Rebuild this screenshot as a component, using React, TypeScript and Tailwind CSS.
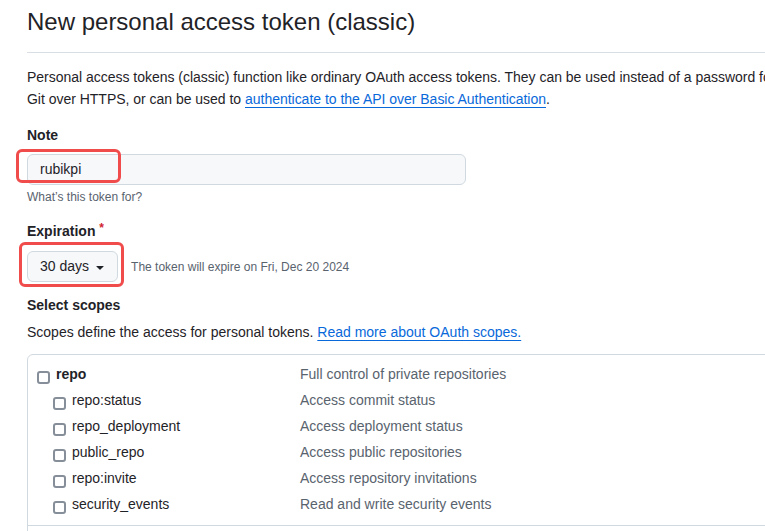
import React from 'react'

const scopes = [
  { name: 'repo', desc: 'Full control of private repositories', parent: true },
  { name: 'repo:status', desc: 'Access commit status' },
  { name: 'repo_deployment', desc: 'Access deployment status' },
  { name: 'public_repo', desc: 'Access public repositories' },
  { name: 'repo:invite', desc: 'Access repository invitations' },
  { name: 'security_events', desc: 'Read and write security events' },
]

function Checkbox() {
  return (
    <span className="inline-block w-[13px] h-[13px] shrink-0 rounded-[3px] border-2 border-[#868f99] bg-white translate-y-[3px]" />
  )
}

function ScopeRow({ name, desc, parent }: { name: string; desc: string; parent?: boolean }) {
  return (
    <div className="flex items-center h-[26px]">
      <div className={`flex items-center w-[263px] gap-[6px] ${parent ? '' : 'pl-[16px]'}`}>
        <Checkbox />
        <span className={parent ? 'font-bold text-[#1f2328]' : 'text-[#1f2328]'}>{name}</span>
      </div>
      <span className="text-[#59636e]">{desc}</span>
    </div>
  )
}

export default function App() {
  return (
    <div className="relative w-[765px] h-[531px] overflow-hidden bg-white text-[#1f2328] font-['Liberation_Sans',Arial,sans-serif] text-[14px]">
      <div className="pl-[27px] w-[1100px]">
        <div className="pt-[4px] pb-[12px] border-b border-[#d8dee4]">
          <h1 className="text-[24px] leading-[36px] font-normal">New personal access token (classic)</h1>
        </div>

        <p className="mt-[13px] leading-[22px] whitespace-nowrap tracking-[-0.02px]">
          Personal access tokens (classic) function like ordinary OAuth access tokens. They can be used instead of a password for
          <br />
          Git over HTTPS, or can be used to{' '}
          <a className="text-[#0969da] underline underline-offset-[3px]">authenticate to the API over Basic Authentication</a>.
        </p>

        <div className="mt-[15px] font-bold leading-[21px]">Note</div>
        <div className="mt-[8px] w-[439px] h-[31px] flex items-center px-[12px] bg-[#f6f8fa] border border-[#d1d9e0] rounded-[6px]">
          rubikpi
        </div>
        <div className="mt-[3px] text-[12px] leading-[18px] text-[#59636e]">What’s this token for?</div>

        <div className="mt-[15px] font-bold leading-[21px]">
          Expiration <span className="text-[#d1242f] text-[12px] align-top relative top-[-3px]">*</span>
        </div>
        <div className="mt-[9px] flex items-center gap-[13px]">
          <button className="h-[31px] flex items-center whitespace-nowrap pl-[12px] pr-[9px] bg-[#f6f8fa] border border-[#d1d9e0] rounded-[6px] text-[14px]">
            <span>30 days</span>
            <svg viewBox="0 0 16 16" className="w-[16px] h-[16px] ml-[3px] fill-[#1f2328]">
              <path d="m4.427 7.427 3.396 3.396a.25.25 0 0 0 .354 0l3.396-3.396A.25.25 0 0 0 11.396 7H4.604a.25.25 0 0 0-.177.427Z" />
            </svg>
          </button>
          <span className="text-[12px] text-[#59636e] whitespace-nowrap">The token will expire on Fri, Dec 20 2024</span>
        </div>

        <div className="mt-[13px] font-bold leading-[21px]">Select scopes</div>
        <p className="mt-[6px] leading-[21px]">
          Scopes define the access for personal tokens.{' '}
          <a className="text-[#0969da] underline underline-offset-[3px]">Read more about OAuth scopes.</a>
        </p>

        <div className="mt-[11px] border border-[#d1d9e0] rounded-[6px]">
          <div className="pl-[9px] pt-[6px] pb-[8px] border-b border-[#d1d9e0]">
            {scopes.map((s) => (
              <ScopeRow key={s.name} {...s} />
            ))}
          </div>
          <div className="h-[40px]" />
        </div>
      </div>

      <div className="absolute left-[16px] top-[149px] w-[105px] h-[34px] border-[3px] border-[#f14c4c] rounded-[6px]" />
      <div className="absolute left-[19px] top-[242px] w-[105px] h-[45px] border-[3px] border-[#f14c4c] rounded-[6px]" />
    </div>
  )
}
